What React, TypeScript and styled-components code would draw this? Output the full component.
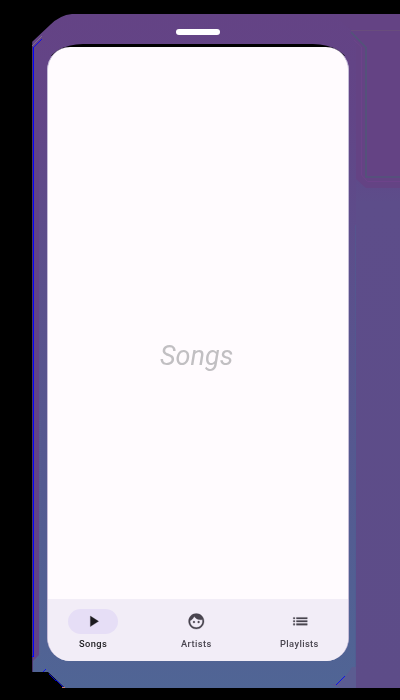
import React from 'react';
import styled, { createGlobalStyle } from 'styled-components';

const GlobalStyle = createGlobalStyle`
  * { box-sizing: border-box; }
  body { margin: 0; background: #000; font-family: Roboto, sans-serif; overflow: hidden; -webkit-font-smoothing: antialiased; }
`;

const Stage = styled.main`
  position: relative;
  isolation: isolate;
  width: 400px;
  height: 700px;
  padding: 29px 51px 39px 47px;
  display: flex;
  flex-direction: column;
  background: #000;
  overflow: hidden;
`;

const Artwork = styled.svg`
  position: absolute;
  inset: 0;
  z-index: -1;
`;

const Speaker = styled.div`
  width: 44.5px;
  height: 6px;
  margin: 0 0 9px 128.8px;
  border-radius: 3px;
  background: #fff;
`;

const Bezel = styled.div`
  flex: 1;
  display: flex;
  padding-top: 3px;
  border-radius: 36px 36px 23px 23px / 22px 22px 23px 23px;
  background: linear-gradient(#000 0 12px, transparent 12px);
`;

const Screen = styled.section`
  flex: 1;
  display: flex;
  flex-direction: column;
  overflow: hidden;
  border-radius: 23px;
  border-left: 1px solid #c5bcd8;
  border-right: 1px solid #c5bcd8;
  background: #fffbfe;
`;

const Content = styled.div`
  flex: 1;
  display: flex;
  align-items: center;
  justify-content: center;
  padding: 65px 3px 0 0;
`;

const Title = styled.h1`
  margin: 0;
  font-size: 27px;
  line-height: 32px;
  font-style: italic;
  font-weight: 400;
  color: #c1bfc2;
  will-change: transform;
`;

const Navigation = styled.nav`
  height: 62px;
  padding: 10px 0 0 20px;
  display: flex;
  gap: 53.5px;
  background: #f2edf7;
`;

const Destination = styled.button<{ $active?: boolean }>`
  width: 50px;
  padding: 0;
  border: 0;
  display: flex;
  flex-direction: column;
  align-items: center;
  gap: 4px;
  background: none;
  color: ${({ $active }) => ($active ? '#1c1b1f' : '#49454f')};
  font: 500 9.3px/12px Roboto, sans-serif;
  letter-spacing: 0.4px;
`;

const Label = styled.span`
  padding-right: 0.6px;
  transform: translateY(-0.5px);
  will-change: transform;
`;

const Indicator = styled.span<{ $active?: boolean }>`
  width: 50px;
  height: 25px;
  display: flex;
  align-items: center;
  justify-content: center;
  border-radius: 13px;
  background: ${({ $active }) => ($active ? '#e6def6' : 'transparent')};
`;

const Icon = styled.svg`
  width: 18.6px;
  height: 18.6px;
  fill: currentColor;
  stroke: currentColor;
  stroke-width: 0.35;
`;

const destinations = [
  { label: 'Songs', path: 'M8.2 5.2v13.6l10.6-6.8z' },
  {
    label: 'Artists',
    path: 'M9 11.75a1.25 1.25 0 1 0 0 2.5 1.25 1.25 0 0 0 0-2.5zm6 0a1.25 1.25 0 1 0 0 2.5 1.25 1.25 0 0 0 0-2.5zM12 2C6.48 2 2 6.48 2 12s4.48 10 10 10 10-4.48 10-10S17.52 2 12 2zm0 18c-4.41 0-8-3.59-8-8 0-.29.02-.58.05-.86 2.36-1.05 4.23-2.98 5.21-5.37C11.07 8.33 14.05 10 17.42 10c.78 0 1.53-.09 2.25-.26.21.71.33 1.47.33 2.26 0 4.41-3.59 8-8 8z',
  },
  {
    label: 'Playlists',
    path: 'M3 13h2v-2H3v2zm0 4h2v-2H3v2zm0-8h2V7H3v2zm4 4h14v-2H7v2zm0 4h14v-2H7v2zM7 7v2h14V7H7z',
  },
];

function FrameArtwork() {
  return (
    <Artwork width="400" height="700" viewBox="0 0 400 700" aria-hidden="true">
      <defs>
        <linearGradient id="frame" x1="0" y1="14" x2="0" y2="688" gradientUnits="userSpaceOnUse">
          <stop offset="0" stopColor="#644385" />
          <stop offset="0.15" stopColor="#624587" />
          <stop offset="0.35" stopColor="#5c4e8b" />
          <stop offset="0.7" stopColor="#545a91" />
          <stop offset="1" stopColor="#506595" />
        </linearGradient>
        <linearGradient id="side" x1="0" y1="160" x2="0" y2="688" gradientUnits="userSpaceOnUse">
          <stop offset="0" stopColor="#604789" />
          <stop offset="0.08" stopColor="#5d4d8a" />
          <stop offset="1" stopColor="#5d4c88" />
        </linearGradient>
      </defs>
      <path d="M72 14H400V688H65L48 672H32V42L50 25Q60 15 72 14Z" fill="url(#frame)" />
      <path d="M32 42H39V655L32 662Z" fill="#624486" />
      <path d="M356 170H400V688H356Z" fill="url(#side)" />
      <path d="M355.5 225V688" stroke="#505b91" strokeOpacity="0.6" />
      <path d="M340 20L356 34V179L366 188H400V14H340Z" fill="#644384" />
      <path d="M354 40L361.5 47V175L367.5 181.5H400" fill="none" stroke="#6d438a" />
      <path d="M351 30.5H400" stroke="#694d7d" />
      <path d="M351 32L366 47.5V177H400" fill="none" stroke="#525579" strokeWidth="1.7" />
      <path d="M40 420V655L33 662" fill="none" stroke="#596a91" strokeWidth="0.6" strokeDasharray="1 1" />
      <path d="M352 667C348 674 343 680 336 684H330L340 688H356V667Z" fill="#5b5c91" />
      <path d="M32.5 42V672" stroke="#493469" />
      <path d="M33.5 47V656L32 657" fill="none" stroke="#00f" shapeRendering="crispEdges" />
      <path d="M32 46L42 36" stroke="#806990" />
      <path d="M33 48L42 39M43 672L46 669M49 674L63 687M336 685L345 676" stroke="#00f" strokeWidth="0.8" shapeRendering="crispEdges" />
      <path d="M62 687.5H65" stroke="#c87b76" />
    </Artwork>
  );
}

export default function App() {
  return (
    <>
      <GlobalStyle />
      <Stage>
        <FrameArtwork />
        <Speaker />
        <Bezel>
          <Screen>
            <Content><Title>Songs</Title></Content>
            <Navigation>
              {destinations.map(({ label, path }, index) => (
                <Destination key={label} $active={index === 0}>
                  <Indicator $active={index === 0}>
                    <Icon viewBox="0 0 24 24" aria-hidden="true"><path d={path} /></Icon>
                  </Indicator>
                  <Label>{label}</Label>
                </Destination>
              ))}
            </Navigation>
          </Screen>
        </Bezel>
      </Stage>
    </>
  );
}
